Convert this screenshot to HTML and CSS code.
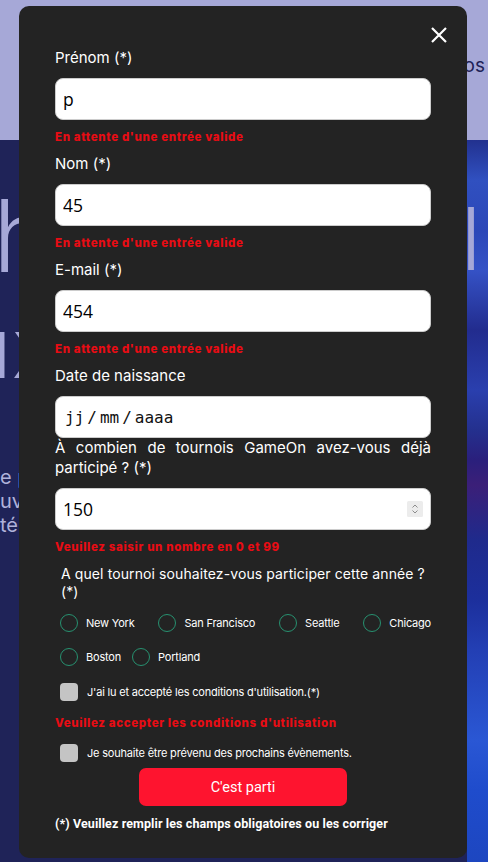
FILE: index.html
```html
<!DOCTYPE html>
<html lang="fr">
<head>
<meta charset="utf-8">
<title>GameOn</title>
<link rel="stylesheet" href="styles.css">
</head>
<body>
<div class="page">
  <header class="topnav">
    <nav class="nav">
      <a href="#">os</a>
    </nav>
  </header>
  <main class="hero">
    <div class="hero-text">
      <h1 class="hero-title"><span class="t1">h</span><span class="t2">ux</span></h1>
      <p class="hero-par">e p<br>uv<br>té</p>
    </div>
    <div class="hero-img"><span class="hero-l">l</span></div>
  </main>
</div>

<div class="modal">
  <div class="modal-content">
    <button class="close" type="button" aria-label="Fermer">
      <svg width="16" height="16" viewBox="0 0 16 16"><path d="M1 1L15 15M15 1L1 15" stroke="#fff" stroke-width="2.2" fill="none"/></svg>
    </button>
    <form class="form">
      <div class="field">
        <label class="label" for="first">Prénom (*)</label>
        <input class="text-control" id="first" type="text" value="p">
        <p class="error">En attente d'une entrée valide</p>
      </div>
      <div class="field">
        <label class="label" for="last">Nom (*)</label>
        <input class="text-control" id="last" type="text" value="45">
        <p class="error">En attente d'une entrée valide</p>
      </div>
      <div class="field">
        <label class="label" for="email">E-mail (*)</label>
        <input class="text-control" id="email" type="text" value="454">
        <p class="error">En attente d'une entrée valide</p>
      </div>
      <div class="field">
        <label class="label">Date de naissance</label>
        <div class="text-control date"><span>jj</span><span class="sep">/</span><span>mm</span><span class="sep">/</span><span>aaaa</span></div>
      </div>
      <div class="field">
        <label class="label justify" for="qty">À combien de tournois GameOn avez-vous déjà participé ? (*)</label>
        <div class="text-control number">
          <input class="bare" id="qty" type="number" value="150">
          <span class="spin"><svg width="16" height="16" viewBox="0 0 16 16"><rect width="16" height="16" rx="1.5" fill="#ececec"/><path d="M5.5 6.5L8 4L10.5 6.5M5.5 9.5L8 12L10.5 9.5" fill="none" stroke="#8c8c8c" stroke-width="1"/></svg></span>
        </div>
        <p class="error">Veuillez saisir un nombre en 0 et 99</p>
      </div>

      <p class="question">A quel tournoi souhaitez-vous participer cette année ? (*)</p>
      <div class="radios">
        <label class="radio"><input type="radio" name="location"><span>New York</span></label>
        <label class="radio"><input type="radio" name="location"><span>San Francisco</span></label>
        <label class="radio"><input type="radio" name="location"><span>Seattle</span></label>
        <label class="radio"><input type="radio" name="location"><span>Chicago</span></label>
        <label class="radio"><input type="radio" name="location"><span>Boston</span></label>
        <label class="radio"><input type="radio" name="location"><span>Portland</span></label>
      </div>

      <label class="check first"><input type="checkbox"><span>J'ai lu et accepté les conditions d'utilisation.(*)</span></label>
      <p class="error terms">Veuillez accepter les conditions d'utilisation</p>
      <label class="check"><input type="checkbox"><span>Je souhaite être prévenu des prochains évènements.</span></label>

      <button class="btn-submit" type="button">C'est parti</button>
      <p class="footnote">(*) Veuillez remplir les champs obligatoires ou les corriger</p>
    </form>
  </div>
</div>
</body>
</html>
```

FILE: styles.css
```css
* { box-sizing: border-box; }
html, body { margin: 0; height: 100%; }
body {
  font-family: Inter, "DejaVu Sans", sans-serif;
  background: #1f2358;
  overflow: hidden;
}

/* ---------- page behind the modal ---------- */
.topnav {
  height: 140px;
  background: #a6a8d7;
  display: flex;
  justify-content: flex-end;
  padding: 54px 3px 0 0;
}
.nav { display: flex; }
.nav a {
  color: #1f2358;
  font-size: 19px;
  line-height: 24px;
  text-decoration: none;
  white-space: nowrap;
}
.hero {
  display: flex;
  justify-content: space-between;
  height: 722px;
}
.hero-text {
  width: 19px;
  overflow: hidden;
  color: #a6a8d7;
}
.hero-title { margin: 46px 0 0; font-weight: 300; white-space: nowrap; }
.hero-title .t1 { display: block; font-size: 100px; line-height: 100px; margin-left: -7px; }
.hero-title .t2 { display: block; font-size: 84px; line-height: 124px; margin-left: -38px; }
.hero-par {
  margin: 55px 0 0;
  font-size: 20px;
  line-height: 24px;
  color: #b0b2da;
  white-space: nowrap;
}
.hero-img {
  width: 21px;
  overflow: hidden;
  background:
    linear-gradient(180deg,
      #22318f 0px, #3050c0 40px, #2c47b8 90px, #3552c6 130px,
      #222c8e 190px, #2a3fae 250px, #24308e 290px, #2a1f7c 320px,
      #3b1f78 345px, #1f2a8c 400px, #1c2f9c 460px, #233fb4 510px,
      #2a57d4 600px, #1f4ccc 650px, #1d46c0 722px);
}
.hero-l {
  display: block;
  margin: 56px 0 0 -6px;
  font-size: 86px;
  line-height: 86px;
  font-weight: 300;
  color: #a6a8d7;
}

/* ---------- modal ---------- */
.modal {
  position: fixed;
  inset: 0;
  padding: 6px 0 0 19px;
}
.modal-content {
  position: relative;
  width: 448px;
  height: 852px;
  background: #232323;
  border-radius: 10px;
  padding: 42px 36px 0;
  color: #fff;
}
.close {
  position: absolute;
  top: 21px;
  right: 20px;
  width: 16px;
  height: 16px;
  padding: 0;
  border: 0;
  background: none;
  display: flex;
}
.form { margin: 0; }

.label {
  display: block;
  font-size: 15px;
  line-height: 20px;
  color: #fff;
  margin-bottom: 10px;
}
.label.justify { text-align: justify; }

.text-control {
  display: block;
  width: 100%;
  height: 42px;
  margin: 0;
  border: 1px solid #cccccc;
  border-radius: 8px;
  background: #fff;
  padding: 0 7px;
  font-family: "Open Sans", "Noto Sans", sans-serif;
  font-size: 17.5px;
  color: #000;
  outline: none;
}
.text-control.date {
  display: flex;
  align-items: center;
  padding-left: 9px;
  font-family: "DejaVu Sans Mono", "Liberation Mono", monospace;
  font-size: 16px;
  color: #111;
}
.date .sep { margin: 0 3px; }
.text-control.number {
  display: flex;
  align-items: center;
}
.bare {
  flex: 1;
  min-width: 0;
  border: 0;
  padding: 0;
  margin: 0;
  font: inherit;
  color: inherit;
  background: transparent;
  outline: none;
  -moz-appearance: textfield;
  appearance: textfield;
}
.bare::-webkit-inner-spin-button,
.bare::-webkit-outer-spin-button { -webkit-appearance: none; margin: 0; }
.spin { display: flex; width: 16px; height: 16px; }

.error {
  margin: 10px 0;
  font-size: 11.5px;
  line-height: 14px;
  font-weight: 800;
  letter-spacing: 0.65px;
  color: #e80c14;
}

.question {
  margin: 11px 0 0 6px;
  font-size: 14px;
  line-height: 18px;
  letter-spacing: 0.1px;
  color: #fff;
}

.radios {
  margin: 5px -8px 0 0;
  padding-left: 5px;
  text-align: justify;
  font-size: 11px;
  line-height: 34px;
}
.radio {
  display: inline-flex;
  align-items: center;
  height: 34px;
  vertical-align: top;
  margin-right: 8px;
  letter-spacing: -0.2px;
  color: #fff;
}
.radio input {
  appearance: none;
  -webkit-appearance: none;
  width: 18px;
  height: 18px;
  margin: 0 8px 0 0;
  border: 1.5px solid #279170;
  border-radius: 50%;
  background: transparent;
}

.check {
  display: flex;
  align-items: center;
  height: 18px;
  padding-left: 5px;
  font-size: 11px;
  letter-spacing: -0.2px;
  color: #fff;
}
.check.first { margin-top: 9px; }
.check input {
  appearance: none;
  -webkit-appearance: none;
  width: 18px;
  height: 18px;
  margin: 0 9px 0 0;
  border-radius: 4px;
  background: #c4c4c4;
}
.error.terms { margin: 15px 0 14px; }

.btn-submit {
  display: block;
  width: 208px;
  height: 38px;
  margin: 6px auto 0;
  border: 0;
  border-radius: 7px;
  background: #fe142f;
  color: #fff;
  font-family: Roboto, sans-serif;
  font-size: 14.5px;
}
.footnote {
  margin: 10px 0 0;
  font-family: Roboto, sans-serif;
  font-size: 12.5px;
  line-height: 16px;
  font-weight: 700;
  letter-spacing: 0.1px;
  color: #fff;
}
```
